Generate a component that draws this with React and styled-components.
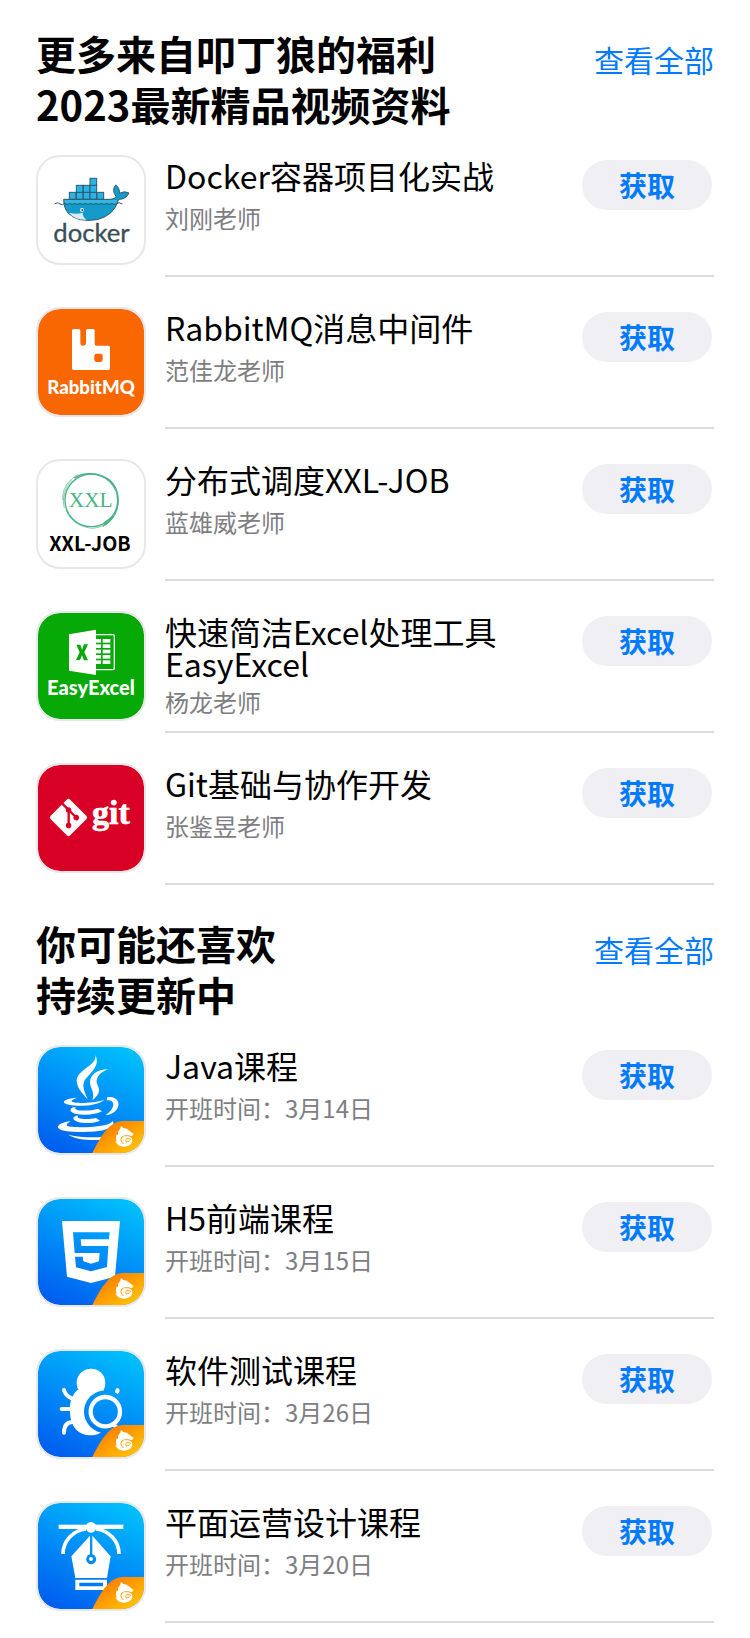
import React, { useId } from "react";
import styled, { createGlobalStyle } from "styled-components";
import { FaGitAlt } from "react-icons/fa";

const GlobalStyle = createGlobalStyle`
  *, *::before, *::after { box-sizing: border-box; }
  body {
    margin: 0;
    background: #fff;
    color: #000;
    font-family: "Noto Sans CJK SC", "Noto Sans", sans-serif;
  }
`;

const Page = styled.main`
  padding: 0 36px 10px;
`;

const Section = styled.section`
  padding: 28px 0 5px;
`;

const SectionHeader = styled.header`
  display: flex;
  justify-content: space-between;
  align-items: flex-start;
  margin-bottom: 25px;
`;

const SectionTitle = styled.h2`
  margin: 0;
  font-size: 40px;
  line-height: 51px;
  font-weight: 700;
`;

const TitleLine = styled.span`
  display: block;
`;

const SeeAll = styled.a`
  padding-top: 7px;
  color: #007aff;
  font-size: 30px;
  line-height: 48px;
  text-decoration: none;
  white-space: nowrap;
`;

const List = styled.ul`
  display: flex;
  flex-direction: column;
  gap: 30px;
  margin: 0;
  padding: 0;
  list-style: none;
`;

const Row = styled.li`
  display: flex;
  gap: 19px;
`;

const Tile = styled.div`
  flex: none;
  width: 110px;
  height: 110px;
  overflow: hidden;
  border: 2px solid #e8e8eb;
  border-radius: 24px;
  background: ${(p) => p.$fill};
  background-clip: padding-box;

  > svg {
    display: block;
    width: 100%;
    height: 100%;
  }
`;

const RowBody = styled.div`
  display: flex;
  flex: 1;
  justify-content: space-between;
  align-items: flex-start;
  gap: 16px;
  min-height: 122px;
  padding: 4px 2px 0 0;
  border-bottom: 2px solid #dcdcdd;
`;

const Info = styled.div`
  display: flex;
  flex-direction: column;
  gap: 7px;
  max-width: 360px;
`;

const CourseName = styled.h3`
  min-height: 36px;
  margin: 0;
  font-size: 32px;
  line-height: 32px;
  font-weight: 400;
`;

const Detail = styled.p`
  margin: 0;
  color: #7e7e82;
  font-size: 24px;
  line-height: 32px;
`;

const GetButton = styled.button`
  flex: none;
  width: 130px;
  height: 50px;
  margin-top: 1px;
  padding: 0;
  border: 0;
  border-radius: 25px;
  background: #f0eff3;
  color: #007aff;
  font-family: inherit;
  font-size: 28px;
  line-height: 50px;
  font-weight: 700;
  cursor: pointer;
`;

const BLUE = "linear-gradient(25deg, #005cee 5%, #0093f8 55%, #00c2fc 95%)";

function DockerArt() {
  return (
    <svg viewBox="24 21 318 318" aria-hidden="true">
      <g fill="#27b4e6" stroke="#35576a" strokeWidth="3">
        {[118, 139, 160, 180, 201].map((x) => (
          <rect key={x} x={x} y="127" width="20" height="21" />
        ))}
        {[139, 160, 180].map((x) => (
          <rect key={x} x={x} y="106" width="20" height="21" />
        ))}
        <rect x="180" y="85" width="20" height="21" />
        <path d="M101 148H238Q256 148 258 139Q244 121 257 105Q270 114 268 130Q284 121 297 129Q288 148 266 148Q252 198 200 209Q144 218 115 190Q101 174 101 148Z" fill="#149bc9" />
      </g>
      <path d="M104 150H262L258 161H105Z" fill="#32b7e4" />
      <path d="M117 188Q140 194 158 188Q158 202 170 209Q135 211 117 188Z" fill="#d8edf3" />
      <path d="M74 162l9-4 7 4q8 5 14-2q8 7 15 0q8 7 15 0q8 7 16 0q8 7 16 0q8 7 16 0q8 7 16 0q8 7 16 0q8 7 16 0q8 7 16 0q6 5 14 2l7-4 10 4" fill="none" stroke="#35576a" strokeWidth="3" />
      <circle cx="156" cy="180" r="6" fill="#e8f4f7" />
      <circle cx="157" cy="180" r="3" fill="#35474e" />
      <text x="70" y="275" fontFamily="Lato, sans-serif" fontSize="77" fill="#3b4f57" stroke="#3b4f57" strokeWidth="1">docker</text>
    </svg>
  );
}

function RabbitArt() {
  return (
    <svg viewBox="24 27 318 318" aria-hidden="true">
      <path fill="#fff" fillRule="evenodd" d="M131 87H146Q151 87 151 92V128Q151 137 159 137Q168 137 168 128V92Q168 87 173 87H189Q194 87 194 92V131Q194 137 200 137H235Q240 137 240 142V205Q240 210 235 210H131Q126 210 126 205V92Q126 87 131 87ZM200 161Q193 161 193 168V179Q193 186 200 186H211Q218 186 218 179V168Q218 161 211 161Z" />
      <text x="183" y="282" textAnchor="middle" fontFamily="Lato, sans-serif" fontWeight="900" fontSize="56" fill="#fff">RabbitMQ</text>
    </svg>
  );
}

function XxlArt() {
  return (
    <svg viewBox="24 33 318 318" aria-hidden="true">
      <g fill="none" stroke="#4ab487">
        <circle cx="184" cy="151" r="79" strokeWidth="4" />
        <path d="M133 84C170 60 235 70 257 114C275 155 262 205 218 229" strokeWidth="4" />
        <path d="M126 91C104 112 96 145 103 175" strokeWidth="2" />
        <path d="M98 150C96 117 116 87 145 74" strokeWidth="2" />
        <path d="M108 180C122 215 150 231 187 235C220 232 238 217 252 198" strokeWidth="2" />
        <path d="M222 220Q238 212 250 198" strokeWidth="8" />
      </g>
      <text x="182" y="170" textAnchor="middle" fontFamily="Liberation Serif, serif" fontSize="64" fill="#4ab487">XXL</text>
      <text x="180" y="303" textAnchor="middle" fontFamily="Noto Sans CJK SC, sans-serif" fontWeight="700" fontSize="59" fill="#000">XXL-JOB</text>
    </svg>
  );
}

function ExcelArt() {
  return (
    <svg viewBox="24 24 318 318" aria-hidden="true">
      <rect x="190" y="89" width="63" height="105" rx="4" fill="none" stroke="#fff" strokeWidth="4" />
      <g fill="#fff">
        {[102, 118, 134, 150, 166].map((y) => (
          <React.Fragment key={y}>
            <rect x="198" y={y} width="15" height="11" />
            <rect x="218" y={y} width="23" height="11" />
          </React.Fragment>
        ))}
        <path d="M117 88L198 74V210L117 197Z" />
        <text x="183" y="271" textAnchor="middle" fontFamily="Lato, sans-serif" fontWeight="900" fontSize="60">EasyExcel</text>
      </g>
      <path d="M139 119H151L156 134L162 118H174L163 142L174 166H162L156 151L150 165H138L149 142Z" fill="#08a808" />
    </svg>
  );
}

function GitArt() {
  return (
    <svg viewBox="24 30 318 318" aria-hidden="true">
      <FaGitAlt x="52" y="124" size="127" color="#fff" />
      <text x="186" y="207" fontFamily="Liberation Serif, serif" fontWeight="700" fontSize="102" fill="#fff" stroke="#fff" strokeWidth="2">git</text>
    </svg>
  );
}

function WolfBadge() {
  const id = useId();
  return (
    <g>
      <defs>
        <linearGradient id={id} x1="0" y1="0" x2="1" y2="1">
          <stop offset="0.15" stopColor="#ff7a00" />
          <stop offset="1" stopColor="#ffd000" />
        </linearGradient>
      </defs>
      <path d="M162 320C185 277 210 222 256 222H320V320Z" fill={`url(#${id})`} />
      <path fill="#fff" d="M249 237L256 243Q268 243 274 251L287 261L281 268L270 267C281 269 286 277 282 286C278 295 268 300 257 299C244 299 236 292 232 282L237 284C233 277 233 270 237 261L240 265C239 255 242 251 246 247Z" />
      <path fill="none" stroke="#ff9d00" strokeWidth="3" strokeLinecap="round" d="M285 270C270 264 254 264 250 273C247 280 250 287 256 289M279 277C271 272 262 275 262 281C263 286 271 286 274 282" />
    </g>
  );
}

function BrandedArt({ children }) {
  return (
    <svg viewBox="0 0 318 318" aria-hidden="true">
      {children}
      <WolfBadge />
    </svg>
  );
}

function JavaArt() {
  return (
    <BrandedArt>
      <g transform="translate(-24 -21)" fill="#fff">
        <path d="M196 45C203 75 140 90 140 122C141 145 158 160 173 178C166 160 156 143 162 126C170 105 215 82 196 45Z" />
        <path d="M234 88C200 88 179 107 180 128C181 143 196 160 187 181C200 170 209 159 207 147C205 136 197 131 201 117C205 103 219 94 234 88Z" />
        <path d="M142 173C112 175 98 182 103 189C112 199 190 205 224 179C190 190 130 192 125 184C123 180 133 176 142 173Z" />
        <path d="M232 172C255 166 272 184 263 204C256 217 240 225 226 226C244 213 256 196 247 185C242 180 236 180 230 181Z" />
        <path d="M128 202C117 209 120 217 135 221C165 228 198 223 216 214L204 206C185 213 150 213 140 209Q132 206 137 202Z" />
        <path d="M138 227C126 232 128 240 142 245C165 252 192 250 210 242L198 234C180 238 155 238 146 234Q140 231 145 227Z" />
        <path d="M122 244C95 246 82 256 84 263C92 280 190 278 222 270C246 263 257 252 247 243C245 252 225 257 190 260C150 263 112 262 110 256Q110 250 122 244Z" />
        <path d="M114 284C150 292 190 294 222 290L216 299C180 302 140 299 114 284Z" />
      </g>
    </BrandedArt>
  );
}

function Html5Art() {
  return (
    <BrandedArt>
      <path transform="translate(-24 -27)" fill="#fff" fillRule="evenodd" d="M96 93H270L255 260L183 279L111 260ZM129 127L134 189H209L207 214L183 221L160 214L158 200H135L138 232L183 244L231 231L235 168H154L152 148H237L239 127Z" />
    </BrandedArt>
  );
}

function BugArt() {
  const id = useId();
  return (
    <BrandedArt>
      <g transform="translate(-24 -27)">
        <mask id={id}>
          <rect x="24" y="27" width="318" height="318" fill="#fff" />
          <circle cx="226" cy="209" r="64" fill="#000" />
        </mask>
        <g mask={`url(#${id})`}>
          <circle cx="183" cy="123" r="43" fill="#fff" />
          <path d="M142 144C123 162 118 184 120 213C122 255 145 280 182 280C205 280 215 269 215 269L222 200V144Z" fill="#fff" />
          <path d="M102 144Q106 160 124 169M95 201H124M102 272Q102 242 126 240" fill="none" stroke="#fff" strokeWidth="12" strokeLinecap="round" />
        </g>
        <circle cx="226" cy="209" r="44" fill="none" stroke="#fff" strokeWidth="13" />
        <path d="M250 246L270 268" stroke="#fff" strokeWidth="12" />
        <path d="M256 145Q257 138 264 138Q271 141 268 150L263 157L255 151Z" fill="#fff" />
      </g>
    </BrandedArt>
  );
}

function PenArt() {
  return (
    <BrandedArt>
      <g transform="translate(-24 -24)" fill="#fff">
        <rect x="86" y="89" width="194" height="13" />
        <circle cx="183" cy="97" r="16" />
        <path d="M99 177C99 137 130 106 168 102M267 177C267 137 236 106 198 102" fill="none" stroke="#fff" strokeWidth="11" />
        <path d="M180 122L124 184L136 249H231L242 184L187 122V178A15 15 0 1 1 180 178Z" />
        <circle cx="183" cy="192" r="6" />
        <path fillRule="evenodd" d="M136 254H231V285H136ZM148 263V274H219V263Z" />
      </g>
    </BrandedArt>
  );
}

const sections = [
  {
    id: "benefits",
    title: ["更多来自叩丁狼的福利", "2023最新精品视频资料"],
    items: [
      { name: "Docker容器项目化实战", detail: "刘刚老师", fill: "#fff", Art: DockerArt },
      { name: "RabbitMQ消息中间件", detail: "范佳龙老师", fill: "#f96702", Art: RabbitArt },
      { name: "分布式调度XXL-JOB", detail: "蓝雄威老师", fill: "#fff", Art: XxlArt },
      { name: "快速简洁Excel处理工具EasyExcel", detail: "杨龙老师", fill: "#06a906", Art: ExcelArt },
      { name: "Git基础与协作开发", detail: "张鉴昱老师", fill: "#d80024", Art: GitArt },
    ],
  },
  {
    id: "more",
    title: ["你可能还喜欢", "持续更新中"],
    items: [
      { name: "Java课程", detail: "开班时间：3月14日", fill: BLUE, Art: JavaArt },
      { name: "H5前端课程", detail: "开班时间：3月15日", fill: BLUE, Art: Html5Art },
      { name: "软件测试课程", detail: "开班时间：3月26日", fill: BLUE, Art: BugArt },
      { name: "平面运营设计课程", detail: "开班时间：3月20日", fill: BLUE, Art: PenArt },
    ],
  },
];

function Course({ name, detail, fill, Art }) {
  return (
    <Row>
      <Tile $fill={fill}>
        <Art />
      </Tile>
      <RowBody>
        <Info>
          <CourseName>{name}</CourseName>
          <Detail>{detail}</Detail>
        </Info>
        <GetButton type="button">获取</GetButton>
      </RowBody>
    </Row>
  );
}

export default function App() {
  return (
    <>
      <GlobalStyle />
      <Page>
        {sections.map((section) => (
          <Section key={section.id} id={section.id}>
            <SectionHeader>
              <SectionTitle>
                {section.title.map((line) => (
                  <TitleLine key={line}>{line}</TitleLine>
                ))}
              </SectionTitle>
              <SeeAll href={`#${section.id}`}>查看全部</SeeAll>
            </SectionHeader>
            <List>
              {section.items.map((item) => (
                <Course key={item.name} {...item} />
              ))}
            </List>
          </Section>
        ))}
      </Page>
    </>
  );
}
